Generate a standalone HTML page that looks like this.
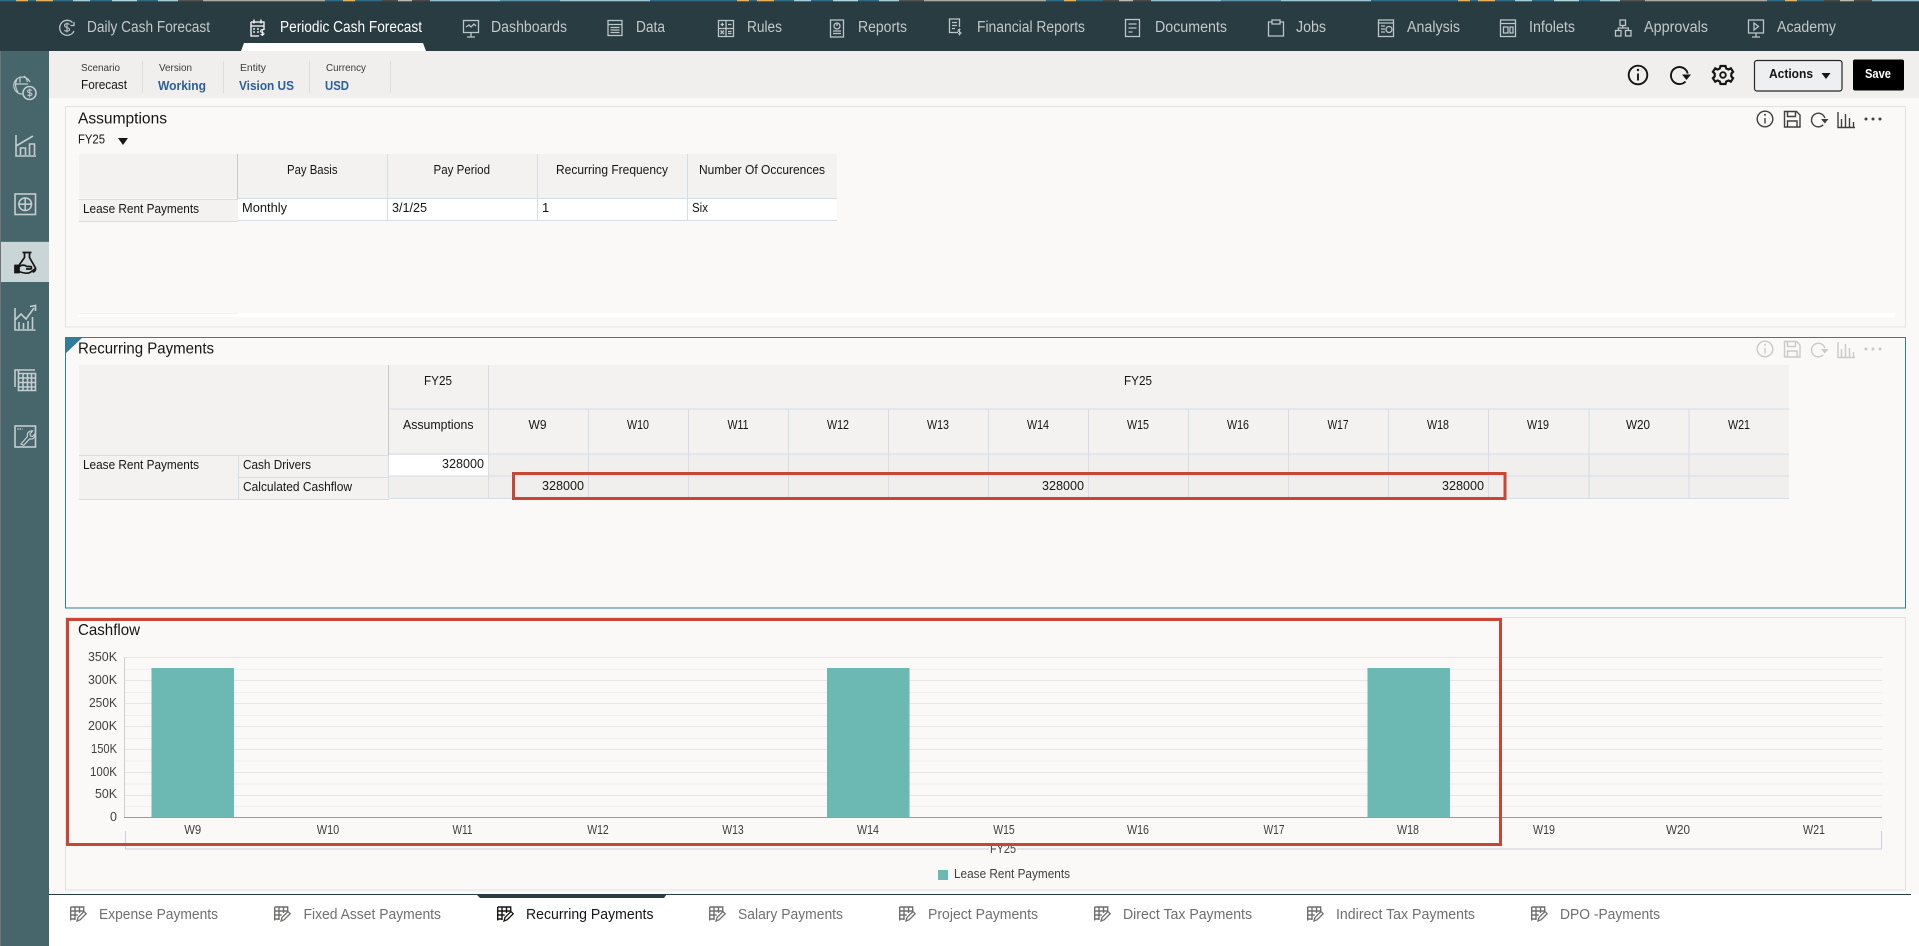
<!DOCTYPE html>
<html lang="en"><head><meta charset="utf-8"><title>Periodic Cash Forecast</title>
<style>
html,body{margin:0;padding:0;width:1919px;height:946px;overflow:hidden;background:#fff}
svg{display:block;position:absolute;left:0;top:0}
text{font-family:"Liberation Sans",sans-serif;fill:#161513;font-size:13px}
.n{font-size:15.5px;fill:#c3c9ca}
.t{font-size:16px}
.l{font-size:10.5px;fill:#3a3a38}
.v{font-size:13px;font-weight:bold;fill:#2a5f9e}
.b{font-size:14.5px;fill:#6f6f6d}
.a{font-size:12.5px;fill:#3f3f3d}
.ic{fill:none;stroke:#bcc5c7;stroke-width:1.3}
.sd{fill:none;stroke:#c4cdcf;stroke-width:1.6}
.tb{fill:none;stroke:#161513;stroke-width:1.9}
.pi{fill:none;stroke:#3f3f3d;stroke-width:1.4}
.pd{fill:none;stroke:#c9c9c7;stroke-width:1.4}
</style></head><body>
<svg width="1919" height="946" viewBox="0 0 1919 946" xmlns="http://www.w3.org/2000/svg">
<defs>
<pattern id="strip" width="721" height="2" patternUnits="userSpaceOnUse">
<rect width="721" height="2" fill="#2f6a85"/>
<rect x="16" width="12" height="2" fill="#e7b05a"/><rect x="36" width="17" height="2" fill="#e7b05a"/>
<rect x="73" width="17" height="2" fill="#a5cfd8"/><rect x="112" width="25" height="2" fill="#b0d8dc"/><rect x="158" width="20" height="2" fill="#a5cfd8"/>
<rect x="178" width="25" height="2" fill="#55544f"/><rect x="203" width="122" height="2" fill="#aaa89f"/>
<rect x="343" width="12" height="2" fill="#e7b05a"/><rect x="382" width="16" height="2" fill="#4c4b47"/><rect x="398" width="14" height="2" fill="#bdb9ae"/><rect x="412" width="18" height="2" fill="#4c4b47"/>
<rect x="430" width="70" height="2" fill="#8fbfd0"/><rect x="500" width="60" height="2" fill="#5a8fa8"/><rect x="560" width="90" height="2" fill="#9cc6d2"/>
</pattern>
<g id="ge">
<path d="M.7 1h13v5.500M.7 14.500V1M.7 5h13M.7 9h7M.7 13h4.500M5 1v13M9.500 1v6" fill="none" stroke-width="1.400"/>
<path d="M7 15l1-3.500 6-6 2.200 2.200-6 6z" fill="#fff" stroke-width="1.300"/>
</g>
</defs>

<!-- page backgrounds -->
<rect width="1919" height="946" fill="#fff"/>
<rect x="49" y="98" width="1870" height="796" fill="#faf9f7"/>
<rect x="49" y="51" width="1870" height="47" fill="#f0efed"/>
<rect y="51" width="49" height="895" fill="#46666c"/>
<rect y="51" width="1" height="895" fill="#6d7476"/>

<!-- top bar -->
<rect width="1919" height="51" fill="#293c42"/>
<rect width="1919" height="1.300" fill="url(#strip)"/>
<path d="M241 51l3-8h179l3 8z" fill="#fff"/>

<text class="n" x="87" y="32" textLength="123" lengthAdjust="spacingAndGlyphs">Daily Cash Forecast</text>
<text class="n" x="280" y="32" textLength="142" lengthAdjust="spacingAndGlyphs" style="fill:#fff">Periodic Cash Forecast</text>
<text class="n" x="491" y="32" textLength="76" lengthAdjust="spacingAndGlyphs">Dashboards</text>
<text class="n" x="636" y="32" textLength="29" lengthAdjust="spacingAndGlyphs">Data</text>
<text class="n" x="747" y="32" textLength="35" lengthAdjust="spacingAndGlyphs">Rules</text>
<text class="n" x="858" y="32" textLength="49" lengthAdjust="spacingAndGlyphs">Reports</text>
<text class="n" x="977" y="32" textLength="108" lengthAdjust="spacingAndGlyphs">Financial Reports</text>
<text class="n" x="1155" y="32" textLength="72" lengthAdjust="spacingAndGlyphs">Documents</text>
<text class="n" x="1296" y="32" textLength="30" lengthAdjust="spacingAndGlyphs">Jobs</text>
<text class="n" x="1407" y="32" textLength="53" lengthAdjust="spacingAndGlyphs">Analysis</text>
<text class="n" x="1529" y="32" textLength="46" lengthAdjust="spacingAndGlyphs">Infolets</text>
<text class="n" x="1644" y="32" textLength="64" lengthAdjust="spacingAndGlyphs">Approvals</text>
<text class="n" x="1777" y="32" textLength="59" lengthAdjust="spacingAndGlyphs">Academy</text>

<!-- nav icons -->
<g class="ic">
<path d="M72.500 22.500A7.500 7.500 0 1 0 74 31M74 22v3.500h-3.500"/><path d="M69.500 24.500c-1-1.200-5-1.200-5 1 0 2.500 5 1.500 5 4 0 2-4 2-5.200.7M67 22.500v10" stroke-width="1.100"/>
<g stroke="#fff"><path d="M251 22h13v8M251 22v14h8M254 19.500v4M261 19.500v4M251 26h13M253 29h2M257 29h2M253 32h2M257 32h2"/><path d="M263.500 30c-2-1-3 .3-3 1.200 0 1.500 3.500 1 3.500 2.600 0 1-1.500 1.400-3.500.7M262.300 29v7" stroke-width="1"/></g>
<rect x="463.500" y="20.500" width="15" height="12"/><path d="M466 27l3-2 2 2 3-3 2 2M471 32.500v4M467 37h8"/>
<rect x="608" y="20.500" width="14" height="15"/><path d="M608 24.500h14M610.500 27.500h9M610.500 30h9M610.500 32.500h9"/>
<rect x="718.500" y="20.500" width="15" height="16"/><path d="M718.500 28.500h15M726 20.500v16M720.500 24.500h3.500M722.300 22.700v3.600M728 24.500h3.500M720.500 30.500l3.500 3.500M724 30.500L720.500 34M728 31.500h3.500M728 33.500h3.500"/>
<rect x="830.500" y="20" width="13" height="17"/><circle cx="837" cy="26" r="3"/><path d="M837 26v-3M833 31h8M833 33.500h8"/>
<path d="M958 32.500h-8.500V19h10v8M952 22.500h5M952 25.500h5M952 28.500h3"/><path d="M960.500 29.500c-2-.7-2.500.5-2.500 1.300 0 1.300 3 .9 3 2.300 0 .9-1.300 1.300-3 .6M959.500 28.500v7" stroke-width="1"/>
<rect x="1125.500" y="19.500" width="14" height="17"/><path d="M1128.500 24h8M1128.500 28h8M1128.500 32h4"/>
<path d="M1272 22h-3.500v14h15V22H1280M1272 20h8v4h-8z"/>
<rect x="1378.500" y="20" width="15" height="16.500"/><path d="M1378.500 23h15M1381 26h4M1381 29h4M1381 32h4"/><circle cx="1389" cy="29.500" r="3"/>
<rect x="1500.500" y="20" width="15" height="16.500"/><path d="M1500.500 23.500h15"/><rect x="1503.500" y="27" width="4.500" height="6"/><rect x="1510" y="27" width="3" height="6"/>
<rect x="1620" y="20" width="5.500" height="5.500"/><rect x="1615.500" y="30.500" width="5.500" height="5.500"/><rect x="1625.500" y="30.500" width="5.500" height="5.500"/><path d="M1622.700 25.500v2.500M1618.300 30.500V28h10v2.500"/>
<rect x="1748.500" y="20" width="15" height="13"/><path d="M1754 23l4.500 3.500-4.500 3.500zM1756 33v4M1752 37h8"/>
</g>

<!-- sub header -->
<text class="l" x="81" y="71" textLength="39" lengthAdjust="spacingAndGlyphs">Scenario</text>
<text x="81" y="89" textLength="46" lengthAdjust="spacingAndGlyphs">Forecast</text>
<text class="l" x="159" y="71" textLength="33" lengthAdjust="spacingAndGlyphs">Version</text>
<text class="v" x="158" y="90" textLength="48" lengthAdjust="spacingAndGlyphs">Working</text>
<text class="l" x="240" y="71" textLength="26" lengthAdjust="spacingAndGlyphs">Entity</text>
<text class="v" x="239" y="90" textLength="55" lengthAdjust="spacingAndGlyphs">Vision US</text>
<text class="l" x="326" y="71" textLength="40" lengthAdjust="spacingAndGlyphs">Currency</text>
<text class="v" x="325" y="90" textLength="24" lengthAdjust="spacingAndGlyphs">USD</text>
<path d="M142.500 61v32M223.500 61v32M309.500 61v32M390.500 61v32" stroke="#dfdedc" fill="none"/>

<!-- toolbar -->
<g class="tb">
<circle cx="1638" cy="75" r="9.300"/><path d="M1638 73.500v7"/><circle cx="1638" cy="70" r="1.200" fill="#161513" stroke="none"/>
<path d="M1685.500 81.500A8.500 8.500 0 1 1 1687.700 73.500"/><path d="M1682 74.500h9l-4.500 5.500z" fill="#161513" stroke="none"/>
<circle cx="1723" cy="75" r="2.800"/>
<path d="M1720.500 66h5l.7 2.500 2.300 1 2.300-1.200 2.300 3.500-1.800 1.800v2.800l1.800 1.800-2.300 3.500-2.300-1.200-2.300 1-.7 2.500h-5l-.7-2.500-2.300-1-2.300 1.200-2.300-3.500 1.800-1.800v-2.800l-1.800-1.800 2.300-3.500 2.300 1.200 2.300-1z" stroke-width="2.200"/>
</g>
<rect x="1754.500" y="60.500" width="87.500" height="30.500" rx="2.500" fill="#edeff0" stroke="#26282a" stroke-width="1.200"/>
<text x="1769" y="78" textLength="44" lengthAdjust="spacingAndGlyphs" style="font-weight:bold;font-size:13px">Actions</text>
<path d="M1821.500 73h9l-4.500 6z" fill="#161513"/>
<rect x="1853" y="59.500" width="51" height="31" rx="2" fill="#000"/>
<text x="1865" y="78" textLength="26" lengthAdjust="spacingAndGlyphs" style="fill:#fff;font-weight:bold;font-size:12.500px">Save</text>

<!-- sidebar -->
<rect x="1" y="242" width="48" height="40" fill="#c9d5d7"/>
<rect x="1" y="241" width="48" height="1" fill="#5d7378"/>
<g class="sd">
<path d="M22 94a8.500 8.500 0 1 1 8-12M15 84h13M17 79c-2 4-2 9 1 13M24 76c2 1.500 3 3.500 3.500 6M20 76.500v6" stroke-width="1.200"/><circle cx="29.500" cy="93" r="6.500"/>
<path d="M32 90.500c-1.500-1-4.500-.8-4.500.8 0 2 4.500 1 4.500 3 0 1.500-3 1.500-4.500.7M29.700 88.500v9" stroke-width="1"/>
<path d="M16 135v21h20M16 146l17-10M20.500 155v-7h5v7M29.500 155v-11h5v11"/>
<rect x="15" y="194" width="20.500" height="20.500"/><circle cx="25.200" cy="204.200" r="6.300"/><path d="M18.900 204.200h12.600M25.200 197.900v12.600"/>
<path d="M15 308v22h20.500M15 320l6-6 5 5 8-11M30 306.500l5.500-1v5.500M19 329v-7M23.500 329v-6M28 329v-8M32.500 329v-12"/>
<path d="M15 387v-17h20M18.500 370v20.500h17V373.500h-17zM18.500 378h17M18.500 382.500h17M18.500 387h17M23 373.500v17M27.500 373.500v17M31.500 373.500v17"/>
<rect x="15" y="426" width="20.500" height="21"/><path d="M17.500 429h5" stroke-dasharray="1.200 1" /><path d="M21 444l6.500-7.500c-1-3 1.200-6 5-5.500l-2.500 2.800.5 2.200 2.200.5 2.300-2.700c.5 3.700-2.300 6-5.300 5l-6 6.500z" stroke-width="1.200"/>
</g>
<g fill="none" stroke="#161513" stroke-width="1.700">
<path d="M22.500 252.500h9M24.500 252.500v5l-6 8.500M29.500 252.500v5l6 10.500c.5 2-1 4-3 4"/>
<path d="M15 265.500h4v7h-4z" fill="#161513"/><path d="M19 266.500c3-2 6-1.500 8 0h3c2 0 2 2.500 0 2.500h-4M19 271.500c4 1.500 8 2.500 11 1l5.500-4"/>
</g>

<!-- Panel 1 -->
<rect x="65.500" y="106.500" width="1840" height="220.500" fill="#faf9f7" stroke="#e3e2e0"/>
<text class="t" x="78" y="123.500" textLength="89" lengthAdjust="spacingAndGlyphs">Assumptions</text>
<text x="78" y="143.500" textLength="27" lengthAdjust="spacingAndGlyphs">FY25</text>
<path d="M118 138h10l-5 7z" fill="#161513"/>
<rect x="79" y="154" width="758" height="44" fill="#f3f2f0"/>
<rect x="79" y="199" width="159" height="22" fill="#f3f2f0"/>
<rect x="238" y="199" width="599" height="21" fill="#fff"/>
<path d="M237.500 154v45M387.500 154v66M537.500 154v66M687.500 154v66M238 198.500h599M238 220.500h599M79 199.500h159M79 221.500h159" stroke="#d5dee7" fill="none"/>
<path d="M237.500 154v45" stroke="#c9c9c9" fill="none"/>
<text x="287" y="174" textLength="50.500" lengthAdjust="spacingAndGlyphs">Pay Basis</text>
<text x="433.500" y="174" textLength="56.500" lengthAdjust="spacingAndGlyphs">Pay Period</text>
<text x="556" y="174" textLength="112" lengthAdjust="spacingAndGlyphs">Recurring Frequency</text>
<text x="699" y="174" textLength="126" lengthAdjust="spacingAndGlyphs">Number Of Occurences</text>
<text x="83" y="213" textLength="116" lengthAdjust="spacingAndGlyphs">Lease Rent Payments</text>
<text x="242" y="212" textLength="45" lengthAdjust="spacingAndGlyphs">Monthly</text>
<text x="392" y="212" textLength="35" lengthAdjust="spacingAndGlyphs">3/1/25</text>
<text x="542" y="212">1</text>
<text x="692" y="212" textLength="16" lengthAdjust="spacingAndGlyphs">Six</text>
<rect x="78" y="313" width="1817" height="4" fill="#fff"/>
<rect x="78" y="313" width="160" height="1" fill="#f3f2f0"/>
<g class="pi">
<circle cx="1765" cy="119" r="7.800"/><path d="M1765 118v5.500"/><circle cx="1765" cy="114.800" r="1" fill="#3f3f3d" stroke="none"/>
<path d="M1784.500 111.500h12l3.500 3.500v12h-15.500zM1787.500 111.500v5h8v-5M1787.500 127v-6h9.500v6"/>
<path d="M1823.200 124.800A6.800 6.800 0 1 1 1824.800 118"/><path d="M1821 119h7.500l-3.700 4.500z" fill="#3f3f3d" stroke="none"/>
<path d="M1838 112v15.500h17M1841.500 127v-8M1845.500 127v-13M1849.500 127v-9M1853.500 127v-5"/>
</g>
<g fill="#3f3f3d"><circle cx="1866" cy="119" r="1.500"/><circle cx="1873" cy="119" r="1.500"/><circle cx="1880" cy="119" r="1.500"/></g>

<!-- Panel 2 -->
<rect x="65.500" y="337.500" width="1840" height="270.500" fill="#faf9f7" stroke="#317b9b"/>
<path d="M65 337h18l-18 17z" fill="#317b9b"/>
<text class="t" x="78" y="353.500" textLength="136" lengthAdjust="spacingAndGlyphs">Recurring Payments</text>
<g class="pd">
<circle cx="1765" cy="349" r="7.800"/><path d="M1765 348v5.500"/><circle cx="1765" cy="344.800" r="1" fill="#c9c9c7" stroke="none"/>
<path d="M1784.500 341.500h12l3.500 3.500v12h-15.500zM1787.500 341.500v5h8v-5M1787.500 357v-6h9.500v6"/>
<path d="M1823.200 354.800A6.800 6.800 0 1 1 1824.800 348"/><path d="M1821 349h7.500l-3.700 4.500z" fill="#c9c9c7" stroke="none"/>
<path d="M1838 342v15.500h17M1841.500 357v-8M1845.500 357v-13M1849.500 357v-9M1853.500 357v-5"/>
</g>
<g fill="#c9c9c7"><circle cx="1866" cy="349" r="1.500"/><circle cx="1873" cy="349" r="1.500"/><circle cx="1880" cy="349" r="1.500"/></g>

<rect x="79" y="365" width="1710" height="90" fill="#f3f2f0"/>
<rect x="79" y="455" width="310" height="44" fill="#f3f2f0"/>
<rect x="389" y="454" width="1400" height="44" fill="#f0efed"/>
<rect x="389" y="455" width="99" height="21" fill="#fff"/>
<g stroke="#d5dee7" fill="none">
<path d="M388.500 365v133M488.500 365v133"/>
<path d="M588.500 409v89M688.500 409v89M788.500 409v89M888.500 409v89M988.500 409v89M1088.500 409v89M1188.500 409v89M1288.500 409v89M1388.500 409v89M1488.500 409v89M1589 409v89M1689 409v89"/>
<path d="M389 409h1400M389 454h1400M489 476h1300M389 476h100M389 498.500h1400M238.500 455v44M79 455.500h310M239 477.500h150M79 499.500h310"/>
</g>
<path d="M388.500 365v90" stroke="#c9c9c9" fill="none"/>
<text x="424" y="385" textLength="28" lengthAdjust="spacingAndGlyphs">FY25</text>
<text x="1124" y="385" textLength="28" lengthAdjust="spacingAndGlyphs">FY25</text>
<text x="403" y="429" textLength="70.500" lengthAdjust="spacingAndGlyphs">Assumptions</text>
<g text-anchor="middle" lengthAdjust="spacingAndGlyphs">
<text x="537.500" y="429" textLength="18" lengthAdjust="spacingAndGlyphs">W9</text><text x="638" y="429" textLength="22" lengthAdjust="spacingAndGlyphs">W10</text><text x="738" y="429" textLength="21" lengthAdjust="spacingAndGlyphs">W11</text><text x="838" y="429" textLength="22" lengthAdjust="spacingAndGlyphs">W12</text><text x="938" y="429" textLength="22" lengthAdjust="spacingAndGlyphs">W13</text><text x="1038" y="429" textLength="22" lengthAdjust="spacingAndGlyphs">W14</text><text x="1138" y="429" textLength="22" lengthAdjust="spacingAndGlyphs">W15</text><text x="1238" y="429" textLength="22" lengthAdjust="spacingAndGlyphs">W16</text><text x="1338" y="429" textLength="21" lengthAdjust="spacingAndGlyphs">W17</text><text x="1438" y="429" textLength="22" lengthAdjust="spacingAndGlyphs">W18</text><text x="1538" y="429" textLength="22" lengthAdjust="spacingAndGlyphs">W19</text><text x="1638" y="429" textLength="24" lengthAdjust="spacingAndGlyphs">W20</text><text x="1739" y="429" textLength="22" lengthAdjust="spacingAndGlyphs">W21</text>
</g>
<text x="83" y="469" textLength="116" lengthAdjust="spacingAndGlyphs">Lease Rent Payments</text>
<text x="243" y="469" textLength="68" lengthAdjust="spacingAndGlyphs">Cash Drivers</text>
<text x="243" y="491" textLength="109" lengthAdjust="spacingAndGlyphs">Calculated Cashflow</text>
<g text-anchor="end">
<text x="484" y="468" textLength="42" lengthAdjust="spacingAndGlyphs">328000</text>
<text x="584" y="490" textLength="42" lengthAdjust="spacingAndGlyphs">328000</text>
<text x="1084" y="490" textLength="42" lengthAdjust="spacingAndGlyphs">328000</text>
<text x="1484" y="490" textLength="42" lengthAdjust="spacingAndGlyphs">328000</text>
</g>
<rect x="513.500" y="473.500" width="991.500" height="25" fill="none" stroke="#c74634" stroke-width="3"/>

<!-- Panel 3 -->
<rect x="65.500" y="617.500" width="1840" height="272.500" fill="#faf9f7" stroke="#e3e2e0"/>
<text class="t" x="78" y="635" textLength="62" lengthAdjust="spacingAndGlyphs">Cashflow</text>
<g fill="none" stroke="#f1f0ee"><path d="M125 669.500h1757M125 692.500h1757M125 715.500h1757M125 738.500h1757M125 761h1757M125 784h1757M125 806.500h1757"/></g>
<g fill="none" stroke="#e6e6e5"><path d="M125 657.500h1757M125 680.500h1757M125 703.500h1757M125 726.500h1757M125 749.500h1757M125 772.500h1757M125 795.500h1757"/></g>
<path d="M124.500 657v160" stroke="#cfcfcd" fill="none"/>
<rect x="151.500" y="668" width="82.500" height="149" fill="#6cb8b2"/>
<rect x="827" y="668" width="82.500" height="149" fill="#6cb8b2"/>
<rect x="1367.500" y="668" width="82.500" height="149" fill="#6cb8b2"/>
<path d="M124 817.500h1758" stroke="#9b9b99" fill="none"/>
<g text-anchor="end">
<text class="a" x="117" y="661" textLength="29" lengthAdjust="spacingAndGlyphs">350K</text><text class="a" x="117" y="684" textLength="29" lengthAdjust="spacingAndGlyphs">300K</text><text class="a" x="117" y="707" textLength="28" lengthAdjust="spacingAndGlyphs">250K</text><text class="a" x="117" y="730" textLength="29" lengthAdjust="spacingAndGlyphs">200K</text><text class="a" x="117" y="753" textLength="26" lengthAdjust="spacingAndGlyphs">150K</text><text class="a" x="117" y="776" textLength="27" lengthAdjust="spacingAndGlyphs">100K</text><text class="a" x="117" y="798" textLength="22" lengthAdjust="spacingAndGlyphs">50K</text><text class="a" x="117" y="821">0</text>
</g>
<g text-anchor="middle">
<text class="a" x="192.700" y="834" textLength="17" lengthAdjust="spacingAndGlyphs">W9</text><text class="a" x="328" y="834" textLength="22.500" lengthAdjust="spacingAndGlyphs">W10</text><text class="a" x="462.500" y="834" textLength="20" lengthAdjust="spacingAndGlyphs">W11</text><text class="a" x="598" y="834" textLength="21.500" lengthAdjust="spacingAndGlyphs">W12</text><text class="a" x="733" y="834" textLength="21.500" lengthAdjust="spacingAndGlyphs">W13</text><text class="a" x="868" y="834" textLength="22" lengthAdjust="spacingAndGlyphs">W14</text><text class="a" x="1004" y="834" textLength="21.500" lengthAdjust="spacingAndGlyphs">W15</text><text class="a" x="1138" y="834" textLength="22" lengthAdjust="spacingAndGlyphs">W16</text><text class="a" x="1274" y="834" textLength="21" lengthAdjust="spacingAndGlyphs">W17</text><text class="a" x="1408" y="834" textLength="22" lengthAdjust="spacingAndGlyphs">W18</text><text class="a" x="1544" y="834" textLength="22" lengthAdjust="spacingAndGlyphs">W19</text><text class="a" x="1678" y="834" textLength="24" lengthAdjust="spacingAndGlyphs">W20</text><text class="a" x="1814" y="834" textLength="22" lengthAdjust="spacingAndGlyphs">W21</text>
</g>
<path d="M125.500 831v18h1756v-18" fill="none" stroke="#cfcdde"/>
<rect x="989" y="846" width="28" height="8" fill="#faf9f7"/>
<text class="a" x="990" y="853" textLength="26" lengthAdjust="spacingAndGlyphs">FY25</text>
<rect x="938" y="870" width="10" height="10" fill="#6cb8b2"/>
<text class="a" x="954" y="878" textLength="116" lengthAdjust="spacingAndGlyphs">Lease Rent Payments</text>
<rect x="67.500" y="619.500" width="1433" height="225" fill="none" stroke="#c74634" stroke-width="3"/>

<!-- bottom tabs -->
<rect x="49" y="894" width="1870" height="52" fill="#fff"/>
<rect x="49" y="894" width="1862" height="1" fill="#293c42"/>
<path d="M476 894h191l-3 4H480z" fill="#293c42"/>
<g stroke="#6f6f6d" fill="none">
<use href="#ge" x="70" y="906"/><use href="#ge" x="274" y="906"/>
<g stroke="#161513"><use href="#ge" x="497" y="906"/></g>
<use href="#ge" x="709" y="906"/><use href="#ge" x="899" y="906"/><use href="#ge" x="1094" y="906"/><use href="#ge" x="1307" y="906"/><use href="#ge" x="1531" y="906"/>
</g>
<text class="b" x="99" y="919" textLength="119" lengthAdjust="spacingAndGlyphs">Expense Payments</text>
<text class="b" x="303.500" y="919" textLength="137.500" lengthAdjust="spacingAndGlyphs">Fixed Asset Payments</text>
<text class="b" x="526" y="919" textLength="127.500" lengthAdjust="spacingAndGlyphs" style="fill:#161513">Recurring Payments</text>
<text class="b" x="738" y="919" textLength="105" lengthAdjust="spacingAndGlyphs">Salary Payments</text>
<text class="b" x="928" y="919" textLength="110" lengthAdjust="spacingAndGlyphs">Project Payments</text>
<text class="b" x="1123" y="919" textLength="129" lengthAdjust="spacingAndGlyphs">Direct Tax Payments</text>
<text class="b" x="1336" y="919" textLength="139" lengthAdjust="spacingAndGlyphs">Indirect Tax Payments</text>
<text class="b" x="1560" y="919" textLength="100" lengthAdjust="spacingAndGlyphs">DPO -Payments</text>
</svg>
</body></html>
